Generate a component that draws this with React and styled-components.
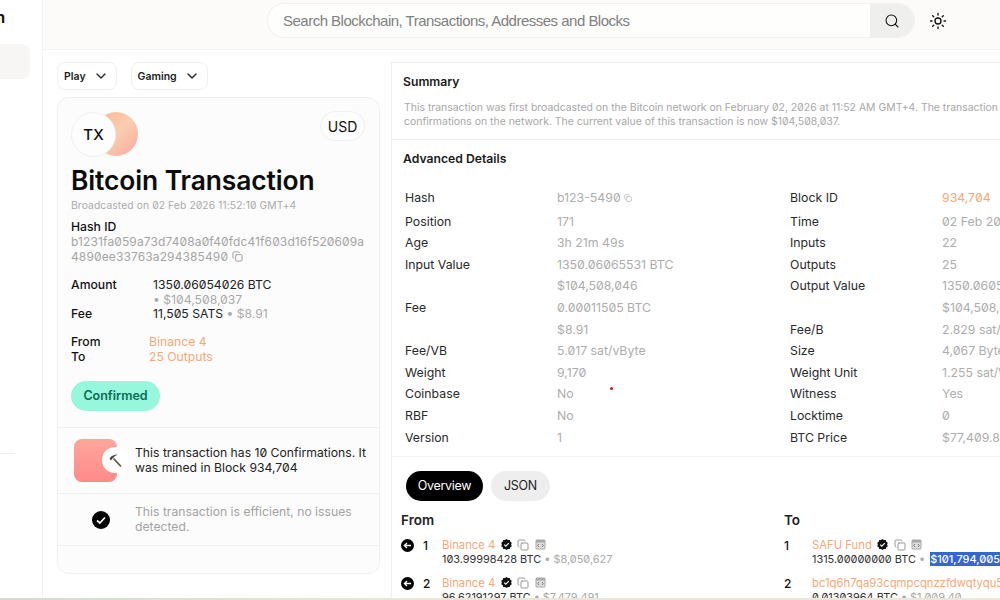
import React from "react";
import styled, { createGlobalStyle } from "styled-components";
import { ChevronDown, Copy, Search, Sun } from "lucide-react";

const Global = createGlobalStyle`
  html, body { margin: 0; padding: 0; background: #fff; height: 600px; overflow: hidden; }
  body { font-family: Inter, "Noto Sans", sans-serif; color: #111; font-feature-settings: "zero" 1; }
  * { box-sizing: border-box; }
`;

const Page = styled.div`display: flex; flex-direction: column; width: 1000px; height: 600px; overflow: hidden;`;
const Frame = styled.div`display: flex; height: 598px; overflow: hidden; position: relative;`;
const BottomStrip = styled.div`height: 2px; background: linear-gradient(90deg, #d3dfc8, #e9e6d2 40%, #ebe8d6);`;

const Sidebar = styled.aside`
  width: 43px; flex: none; border-right: 1px solid #f3f2f0; overflow: hidden;
  display: flex; flex-direction: column; background: #fff;
`;
const Brand = styled.div`
  height: 44px; display: flex; justify-content: flex-end; padding: 8px 37px 0 0;
  font-size: 15px; font-weight: 700; white-space: nowrap; line-height: 20px;
`;
const SideActive = styled.div`width: 30px; height: 35px; background: #f7f6f4; border-radius: 0 8px 8px 0;`;
const SideRule = styled.div`width: 15px; height: 1px; background: #f0efed; margin-top: 374px;`;

const Content = styled.div`flex: 1; min-width: 0; display: flex; flex-direction: column;`;
const Header = styled.header`
  height: 50px; flex: none; background: #fcfbfa; border-bottom: 1px solid #f3f2f0;
  display: flex; align-items: flex-start; padding: 3px 0 0 224px; gap: 14px;
`;
const SearchBar = styled.div`
  width: 648px; height: 35px; border: 1px solid #f1f0ee; border-radius: 18px; background: #fefefd;
  display: flex; overflow: hidden;
`;
const SearchText = styled.div`
  flex: 1; padding-left: 15px; font: 15px/34px "Liberation Sans", Arial, sans-serif; letter-spacing: -.51px; color: #808080;
`;
const SearchButton = styled.div`
  width: 44px; background: #efefee; display: flex; align-items: center; justify-content: center;
`;
const ThemeIcon = styled.div`height: 35px; display: flex; align-items: center; color: #111;`;

const Body = styled.div`flex: 1; min-height: 0; display: flex; padding: 12px 0 0 14px; gap: 11px;`;
const LeftColumn = styled.div`width: 323px; flex: none; display: flex; flex-direction: column; gap: 7px;`;
const Pills = styled.div`display: flex; gap: 14px;`;
const Pill = styled.div`
  height: 28px; border: 1px solid #f1f0ee; border-radius: 8px; padding: 0 7px 0 6px; background: #fff;
  display: flex; align-items: center; gap: 7px; font-size: 10.5px; font-weight: 600; color: #222;
`;

const Card = styled.section`
  height: 477px; border: 1px solid #f1f0ee; border-radius: 12px; background: #fcfcfc; display: flex; flex-direction: column;
`;
const CardTop = styled.div`height: 329px; padding: 14px 12px 0 13px; position: relative; flex: none;`;
const Logo = styled.div`display: flex; height: 44px;`;
const TxCircle = styled.div`
  width: 45px; height: 45px; border-radius: 50%; background: #fdfdfd; border: 1px solid #f1f0ee; z-index: 1;
  display: flex; align-items: center; justify-content: center; font-size: 15px; font-weight: 500;
`;
const Peach = styled.div`
  width: 44px; height: 44px; border-radius: 50%; margin-left: -22px;
  background: linear-gradient(135deg, #ffb794 0%, #f9cdaf 50%, #fba79f 100%);
`;
const Currency = styled.div`
  position: absolute; top: 13px; right: 14px; width: 45px; height: 30px; border: 1px solid #f1f0ee; border-radius: 15px; background: #fdfdfd;
  display: flex; align-items: center; justify-content: center; font-size: 14px;
`;
const Title = styled.h1`margin: 8px 0 0; font-size: 26.4px; line-height: 33px; font-weight: 600; color: #0c0c0c; letter-spacing: -.1px;`;
const Broadcast = styled.div`font-size: 10.3px; line-height: 14px; color: #ababab; margin-top: 1px; letter-spacing: .1px;`;
const HashLabel = styled.div`font-size: 12.2px; line-height: 15px; font-weight: 500; margin-top: 7px;`;
const HashValue = styled.div`font-size: 12px; line-height: 15px; color: #a5a5a5; word-break: break-all; letter-spacing: .12px;`;
const InlineCopy = styled.span`display: inline-block; vertical-align: -1px; margin-left: 4px; color: #999;`;
const Facts = styled.div`display: grid; grid-template-columns: 82px 1fr; margin-top: 13px; font-size: 12.2px; line-height: 14.5px;`;
const FactLabel = styled.div`font-weight: 500;`;
const FactValue = styled.div`color: #222;`;
const Muted = styled.span`color: #aaa;`;
const Links = styled.div`display: grid; grid-template-columns: 78px 1fr; margin-top: 13.5px; font-size: 12.2px; line-height: 14.5px;`;
const Orange = styled.div`color: #f6a877;`;
const Confirmed = styled.div`
  display: flex; align-items: center; justify-content: center; margin-top: 16.5px; width: 89px; height: 30px; border-radius: 15px;
  background: #96f7dc; color: #0b6b50; font-size: 12.5px; font-weight: 600;
`;
const Notice = styled.div`
  height: ${p => p.$h}px; border-top: 1px solid #f1f0ee; display: flex; align-items: center; padding-left: ${p => p.$pad}px;
  font-size: 12.2px; line-height: 14.6px; flex: none; color: ${p => p.$muted ? "#a3a3a3" : "#222"};
`;
const MinerBox = styled.div`
  width: 43px; height: 43px; border-radius: 8px; background: linear-gradient(180deg, #ffa69b, #ff8a8a); position: relative; flex: none; margin-right: 18px;
`;
const PickBadge = styled.div`
  position: absolute; right: -11px; top: 8px; width: 26px; height: 26px; border-radius: 50%; background: #fff;
  display: flex; align-items: center; justify-content: center;
`;
const CheckWrap = styled.div`width: 18px; flex: none; margin-right: 25px; display: flex;`;
const NoticeText = styled.div`width: 238px;`;

const Panel = styled.main`flex: 1; min-width: 0; border-left: 1px solid #f1f0ee; border-top: 1px solid #f1f0ee; overflow: hidden; position: relative;`;
const Inner = styled.div`width: 800px;`;
const Summary = styled.div`height: 77px; padding: 11px 0 0 11px; border-bottom: 1px solid #f1f0ee;`;
const SectionTitle = styled.h2`margin: 0; font-size: 12.2px; line-height: 15px; font-weight: 600; color: #1a1a1a;`;
const SummaryText = styled.p`margin: 12px 0 0 1px; font-size: 10.45px; line-height: 13.5px; color: #a8a8a8; white-space: nowrap;`;
const Advanced = styled.div`height: 317px; padding: 11px 0 0 11px; border-bottom: 1px solid #f1f0ee;`;
const DetailCols = styled.div`display: flex; margin-top: 21.4px; padding-left: 2px;`;
const DetailCol = styled.div`
  display: grid; grid-template-columns: 152px 1fr; width: 385px; flex: none; grid-template-rows: 23.3px repeat(11, 21.6px);
  font-size: 12.3px; line-height: 21.6px; align-content: start;
`;
const DLabel = styled.div`color: #2a2a2a;`;
const DValue = styled.div`color: ${p => p.$accent ? "#f6a877" : "#adadad"}; white-space: nowrap; height: 21.6px; display: flex; align-items: center; gap: 3px;`;
const Tabs = styled.div`display: flex; gap: 8px; padding: 14px 0 0 14px;`;
const Tab = styled.div`
  height: 30px; border-radius: 15px; display: flex; align-items: center; justify-content: center; width: ${p => p.$w}px; padding-bottom: 1px;
  font-size: 12.5px; letter-spacing: -.3px; background: ${p => p.$active ? "#000" : "#eeeeee"}; color: ${p => p.$active ? "#fff" : "#222"};
`;
const Lists = styled.div`display: flex; margin-top: 10px; padding-left: 9px;`;
const ListCol = styled.div`width: 383px; flex: none;`;
const ListTitle = styled.h3`margin: 0 0 9px; font-size: 13.5px; line-height: 18px; font-weight: 600; color: #222;`;
const TxRow = styled.div`display: flex; height: 38px; white-space: nowrap;`;
const RowLead = styled.div`width: ${p => p.$w}px; flex: none; display: flex; align-items: flex-start; gap: 9px; font-size: 12px; font-weight: 500; line-height: 15px;`;
const RowMain = styled.div`font-size: 10.9px; line-height: 14px; margin-top: -1px;`;
const NameLine = styled.div`display: flex; align-items: center; gap: 5.5px; height: 15px; color: #f6a877; font-size: 11.3px;`;
const AmountLine = styled.div`color: #333;`;
const Selected = styled.span`background: #3367d1; color: #fff; font-weight: 500; margin-left: 2px;`;
const RedDot = styled.div`position: absolute; left: 218px; top: 324px; width: 3px; height: 3px; border-radius: 50%; background: #e11;`;

const BackIcon = () => (
  <svg width="13" height="13" viewBox="0 0 13 13" style={{ marginTop: 1 }}>
    <circle cx="6.5" cy="6.5" r="6.5" fill="#000" />
    <path d="M10 6.5H3.4M6 4 3.4 6.5 6 9" stroke="#fff" strokeWidth="1.3" fill="none" />
  </svg>
);
const Verified = () => (
  <svg width="11" height="11" viewBox="0 0 24 24">
    <path d="M12 0l3.2 2.4 4-.2 1 3.9 3.3 2.3-1.4 3.6 1.4 3.6-3.3 2.3-1 3.9-4-.2L12 24l-3.2-2.4-4 .2-1-3.9L.5 15.6 1.9 12 .5 8.4l3.3-2.3 1-3.9 4 .2z" fill="#111" />
    <path d="M7 12.2l3.4 3.4L17 9" stroke="#fff" strokeWidth="2.4" fill="none" />
  </svg>
);
const CodeBox = () => (
  <svg width="11" height="11" viewBox="0 0 11 11">
    <rect x=".5" y=".5" width="10" height="10" rx="1.5" fill="#a8a8a8" />
    <rect x="1.5" y="3.5" width="8" height="6" fill="#ddd" />
    <path d="M4 5 2.8 6.5 4 8M7 5l1.2 1.5L7 8" stroke="#666" strokeWidth=".8" fill="none" />
  </svg>
);
const Pick = () => (
  <svg width="15" height="15" viewBox="0 0 15 15">
    <path d="M5.5 5.5 13 13.5" stroke="#6b5a48" strokeWidth="1.8" />
    <path d="M1.5 5.5C3.5 2.5 6 1.5 10 1.5 8 2.5 5 4 3 7.5z" fill="#444" />
  </svg>
);
const CheckDot = () => (
  <svg width="18" height="18" viewBox="0 0 18 18">
    <circle cx="9" cy="9" r="9" fill="#000" />
    <path d="M5 9.5 7.8 12 13 6.5" stroke="#fff" strokeWidth="1.7" fill="none" />
  </svg>
);

const leftRows = [
  ["Hash", <>b123-5490 <Copy size={8} /></>], ["Position", "171"], ["Age", "3h 21m 49s"], ["Input Value", "1350.06065531 BTC"],
  ["", "$104,508,046"], ["Fee", "0.00011505 BTC"], ["", "$8.91"], ["Fee/VB", "5.017 sat/vByte"], ["Weight", "9,170"],
  ["Coinbase", "No"], ["RBF", "No"], ["Version", "1"],
];
const rightRows = [
  ["Block ID", "934,704", true], ["Time", "02 Feb 2026 11:52:10"], ["Inputs", "22"], ["Outputs", "25"], ["Output Value", "1350.06054026 BTC"],
  ["", "$104,508,037"], ["Fee/B", "2.829 sat/Byte"], ["Size", "4,067 Bytes"], ["Weight Unit", "1.255 sat/WU"], ["Witness", "Yes"],
  ["Locktime", "0"], ["BTC Price", "$77,409.89"],
];

const Icons = () => (
  <>
    <Verified />
    <Copy size={12} color="#999" />
    <CodeBox />
  </>
);

export default function App() {
  return (
    <Page>
      <Global />
      <Frame>
        <Sidebar>
          <Brand>Bitcoin</Brand>
          <SideActive />
          <SideRule />
        </Sidebar>
        <Content>
          <Header>
            <SearchBar>
              <SearchText>Search Blockchain, Transactions, Addresses and Blocks</SearchText>
              <SearchButton><Search size={16} strokeWidth={1.6} /></SearchButton>
            </SearchBar>
            <ThemeIcon><Sun size={18} strokeWidth={1.8} /></ThemeIcon>
          </Header>
          <Body>
            <LeftColumn>
              <Pills>
                <Pill>Play <ChevronDown size={16} /></Pill>
                <Pill>Gaming <ChevronDown size={16} /></Pill>
              </Pills>
              <Card>
                <CardTop>
                  <Logo><TxCircle>TX</TxCircle><Peach /></Logo>
                  <Currency>USD</Currency>
                  <Title>Bitcoin Transaction</Title>
                  <Broadcast>Broadcasted on 02 Feb 2026 11:52:10 GMT+4</Broadcast>
                  <HashLabel>Hash ID</HashLabel>
                  <HashValue>
                    b1231fa059a73d7408a0f40fdc41f603d16f520609a4890ee33763a294385490
                    <InlineCopy><Copy size={11} /></InlineCopy>
                  </HashValue>
                  <Facts>
                    <FactLabel>Amount</FactLabel>
                    <FactValue>1350.06054026 BTC<br /><Muted>• $104,508,037</Muted></FactValue>
                    <FactLabel>Fee</FactLabel>
                    <FactValue>11,505 SATS <Muted>• $8.91</Muted></FactValue>
                  </Facts>
                  <Links>
                    <FactLabel>From</FactLabel><Orange>Binance 4</Orange>
                    <FactLabel>To</FactLabel><Orange>25 Outputs</Orange>
                  </Links>
                  <Confirmed>Confirmed</Confirmed>
                </CardTop>
                <Notice $h={66} $pad={16}>
                  <MinerBox><PickBadge><Pick /></PickBadge></MinerBox>
                  <NoticeText>This transaction has 10 Confirmations. It was mined in Block 934,704</NoticeText>
                </Notice>
                <Notice $h={52} $pad={34} $muted>
                  <CheckWrap><CheckDot /></CheckWrap>
                  <NoticeText>This transaction is efficient, no issues detected.</NoticeText>
                </Notice>
                <Notice $h={28} $pad={0} />
              </Card>
            </LeftColumn>
            <Panel>
              <Inner>
                <Summary>
                  <SectionTitle>Summary</SectionTitle>
                  <SummaryText>
                    This transaction was first broadcasted on the Bitcoin network on February 02, 2026 at 11:52 AM GMT+4. The transaction has 10<br />
                    confirmations on the network. The current value of this transaction is now $104,508,037.
                  </SummaryText>
                </Summary>
                <Advanced>
                  <SectionTitle>Advanced Details</SectionTitle>
                  <DetailCols>
                    <DetailCol>
                      {leftRows.map(([l, v], i) => (
                        <React.Fragment key={i}><DLabel>{l}</DLabel><DValue>{v}</DValue></React.Fragment>
                      ))}
                    </DetailCol>
                    <DetailCol>
                      {rightRows.map(([l, v, a], i) => (
                        <React.Fragment key={i}><DLabel>{l}</DLabel><DValue $accent={a}>{v}</DValue></React.Fragment>
                      ))}
                    </DetailCol>
                  </DetailCols>
                </Advanced>
                <Tabs>
                  <Tab $active $w={77}>Overview</Tab>
                  <Tab $w={59}>JSON</Tab>
                </Tabs>
                <Lists>
                  <ListCol>
                    <ListTitle>From</ListTitle>
                    <TxRow>
                      <RowLead $w={41}><BackIcon />1</RowLead>
                      <RowMain>
                        <NameLine>Binance 4 <Icons /></NameLine>
                        <AmountLine>103.99998428 BTC <Muted>• $8,050,627</Muted></AmountLine>
                      </RowMain>
                    </TxRow>
                    <TxRow>
                      <RowLead $w={41}><BackIcon />2</RowLead>
                      <RowMain>
                        <NameLine>Binance 4 <Icons /></NameLine>
                        <AmountLine>96.62191297 BTC <Muted>• $7,479,491</Muted></AmountLine>
                      </RowMain>
                    </TxRow>
                  </ListCol>
                  <ListCol>
                    <ListTitle>To</ListTitle>
                    <TxRow>
                      <RowLead $w={28}>1</RowLead>
                      <RowMain>
                        <NameLine>SAFU Fund <Icons /></NameLine>
                        <AmountLine>1315.00000000 BTC <Muted>•</Muted> <Selected>$101,794,005</Selected></AmountLine>
                      </RowMain>
                    </TxRow>
                    <TxRow>
                      <RowLead $w={28}>2</RowLead>
                      <RowMain>
                        <NameLine>bc1q6h7qa93cqmpcqnzzfdwqtyqu5x8f</NameLine>
                        <AmountLine>0.01303964 BTC <Muted>• $1,009.40</Muted></AmountLine>
                      </RowMain>
                    </TxRow>
                  </ListCol>
                </Lists>
              </Inner>
              <RedDot />
            </Panel>
          </Body>
        </Content>
      </Frame>
      <BottomStrip />
    </Page>
  );
}
